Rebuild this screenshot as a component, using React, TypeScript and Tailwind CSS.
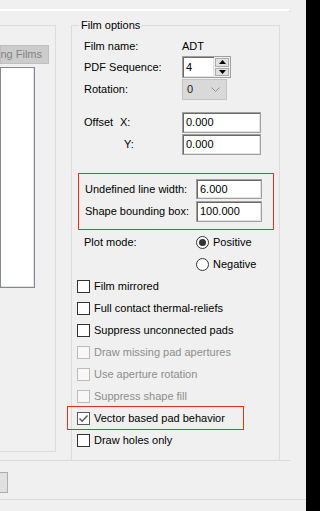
import React from 'react';

const font = { fontFamily: '"Liberation Sans", Arial, sans-serif' };

function TextBox({ value, className = '' }: { value: string; className?: string }) {
  return (
    <div
      className={`flex items-center bg-white border border-[#a0a0a0] shadow-[inset_1px_1px_0_#696969,inset_-1px_-1px_0_#e3e3e3] pl-[3px] text-[11px] text-black ${className}`}
    >
      {value}
    </div>
  );
}

function CheckBox({ label, checked = false, disabled = false }: { label: string; checked?: boolean; disabled?: boolean }) {
  return (
    <div className="flex items-center h-[22px] gap-[4px]">
      <div
        className={`w-[13px] h-[13px] border flex items-center justify-center ${
          disabled ? 'border-[#bcbcbc] bg-[#f7f7f7]' : checked ? 'border-[#5a5a5a] bg-white' : 'border-[#333333] bg-white'
        }`}
      >
        {checked && (
          <svg width="11" height="11" viewBox="0 0 11 11">
            <polyline points="1.5,5.5 4.2,8.2 9.5,2.5" fill="none" stroke="#5e5e5e" strokeWidth="1.6" />
          </svg>
        )}
      </div>
      <span className={`text-[11px] ${disabled ? 'text-[#8d8d8d]' : 'text-black'}`}>{label}</span>
    </div>
  );
}

function Radio({ label, selected = false }: { label: string; selected?: boolean }) {
  return (
    <div className="flex items-center gap-[4px]">
      <div className="w-[13px] h-[13px] rounded-full border border-[#333333] bg-white flex items-center justify-center">
        {selected && <div className="w-[7px] h-[7px] rounded-full bg-[#333333]" />}
      </div>
      <span className="text-[11px] text-black">{label}</span>
    </div>
  );
}

export default function App() {
  return (
    <div className="w-[320px] h-[511px] flex bg-[#f0f0f0] overflow-hidden text-[11px] text-black" style={font}>
      <div className="w-[306px] flex flex-col">
        {/* tab page top edge */}
        <div className="mt-[9px] h-[3px] w-[290px] border-t-2 border-white border-r border-r-[#d9d9d9]" />

        <div className="mt-[13px] flex items-start">
          {/* left group (cut off) */}
          <div className="w-[56px] h-[427px] border-t border-r border-b border-[#dcdcdc] flex flex-col">
            <div className="mt-[19px] w-[49px] h-[19px] bg-[#cccccc] border border-[#bfbfbf] flex items-center justify-end overflow-hidden pr-[6px] whitespace-nowrap text-[#838383]">
              Add Missing Films
            </div>
            <div className="mt-[3px] w-[35px] h-[221px] bg-white border border-[#828790] shadow-[inset_-1px_-1px_0_#e3e3e3]" />
          </div>

          {/* right group: Film options */}
          <div className="relative ml-[15px] w-[209px] h-[435px] border-t border-l border-r border-[#dcdcdc] pl-[12px] pt-[11px] flex flex-col">
            <span className="absolute -top-[8px] left-[7px] px-[2px] bg-[#f0f0f0] leading-[14px]">Film options</span>

            <div className="flex items-center h-[19px]">
              <span className="w-[98px]">Film name:</span>
              <span>ADT</span>
            </div>

            <div className="flex items-center h-[22px]">
              <span className="w-[98px]">PDF Sequence:</span>
              <div className="flex h-[22px] w-[49px] border border-[#a0a0a0] bg-[#f0f0f0]">
                <TextBox value="4" className="w-[31px] h-full border-0" />
                <div className="flex flex-col w-[16px] h-full px-[1px] py-[1px] gap-[1px]">
                  <div className="flex-1 bg-[#e1e1e1] border border-[#adadad] flex items-center justify-center">
                    <svg width="7" height="4" viewBox="0 0 7 4"><polygon points="3.5,0 7,4 0,4" fill="#000" /></svg>
                  </div>
                  <div className="flex-1 bg-[#e1e1e1] border border-[#adadad] flex items-center justify-center">
                    <svg width="7" height="4" viewBox="0 0 7 4"><polygon points="0,0 7,0 3.5,4" fill="#000" /></svg>
                  </div>
                </div>
              </div>
            </div>

            <div className="flex items-center h-[21px] mt-[1px]">
              <span className="w-[98px]">Rotation:</span>
              <div className="w-[45px] h-[21px] bg-[#d9d9d9] border border-[#c4c4c4] flex items-center justify-between pl-[4px] pr-[6px]">
                <span className="text-[#222]">0</span>
                <svg width="9" height="5" viewBox="0 0 9 5">
                  <polyline points="0.5,0.5 4.5,4.5 8.5,0.5" fill="none" stroke="#8c8c8c" strokeWidth="1" />
                </svg>
              </div>
            </div>

            <div className="flex items-center h-[21px] mt-[12px]">
              <span className="w-[36px]">Offset</span>
              <span className="w-[62px]">X:</span>
              <TextBox value="0.000" className="w-[79px] h-[21px]" />
            </div>
            <div className="flex items-center h-[21px] mt-[1px]">
              <span className="w-[98px] pl-[40px]">Y:</span>
              <TextBox value="0.000" className="w-[79px] h-[21px]" />
            </div>

            <div className="mt-[18px] -ml-[6px] w-[196px] border border-[#e8301c] pt-[5px] pb-[7px] pl-[6px] flex flex-col gap-[2px]">
              <div className="flex items-center h-[20px]">
                <span className="w-[111px]">Undefined line width:</span>
                <TextBox value="6.000" className="w-[66px] h-[20px]" />
              </div>
              <div className="flex items-center h-[21px]">
                <span className="w-[111px]">Shape bounding box:</span>
                <TextBox value="100.000" className="w-[66px] h-[21px]" />
              </div>
            </div>

            <div className="flex mt-[2px]">
              <span className="w-[112px] h-[21px] flex items-center">Plot mode:</span>
              <div className="flex flex-col">
                <div className="h-[21px] flex items-center"><Radio label="Positive" selected /></div>
                <div className="h-[22px] flex items-center"><Radio label="Negative" /></div>
              </div>
            </div>

            <div className="-ml-[7px] flex flex-col">
              <CheckBox label="Film mirrored" />
              <CheckBox label="Full contact thermal-reliefs" />
              <CheckBox label="Suppress unconnected pads" />
              <CheckBox label="Draw missing pad apertures" disabled />
              <CheckBox label="Use aperture rotation" disabled />
              <CheckBox label="Suppress shape fill" disabled />
              <div className="-ml-[10px] -my-px w-[177px] border border-[#e8301c] pl-[9px]">
                <CheckBox label="Vector based pad behavior" checked />
              </div>
              <CheckBox label="Draw holes only" />
            </div>
          </div>
        </div>

        {/* tab page bottom edge */}
        <div className="h-px w-[290px] bg-[#dadada]" />

        <div className="mt-[11px] w-[8px] h-[21px] bg-[#e1e1e1] border border-[#adadad] border-l-0" />

        <div className="mt-[6px] h-px w-full bg-[#d9d9d9]" />
      </div>
      <div className="w-[14px] h-full bg-black" />
    </div>
  );
}
